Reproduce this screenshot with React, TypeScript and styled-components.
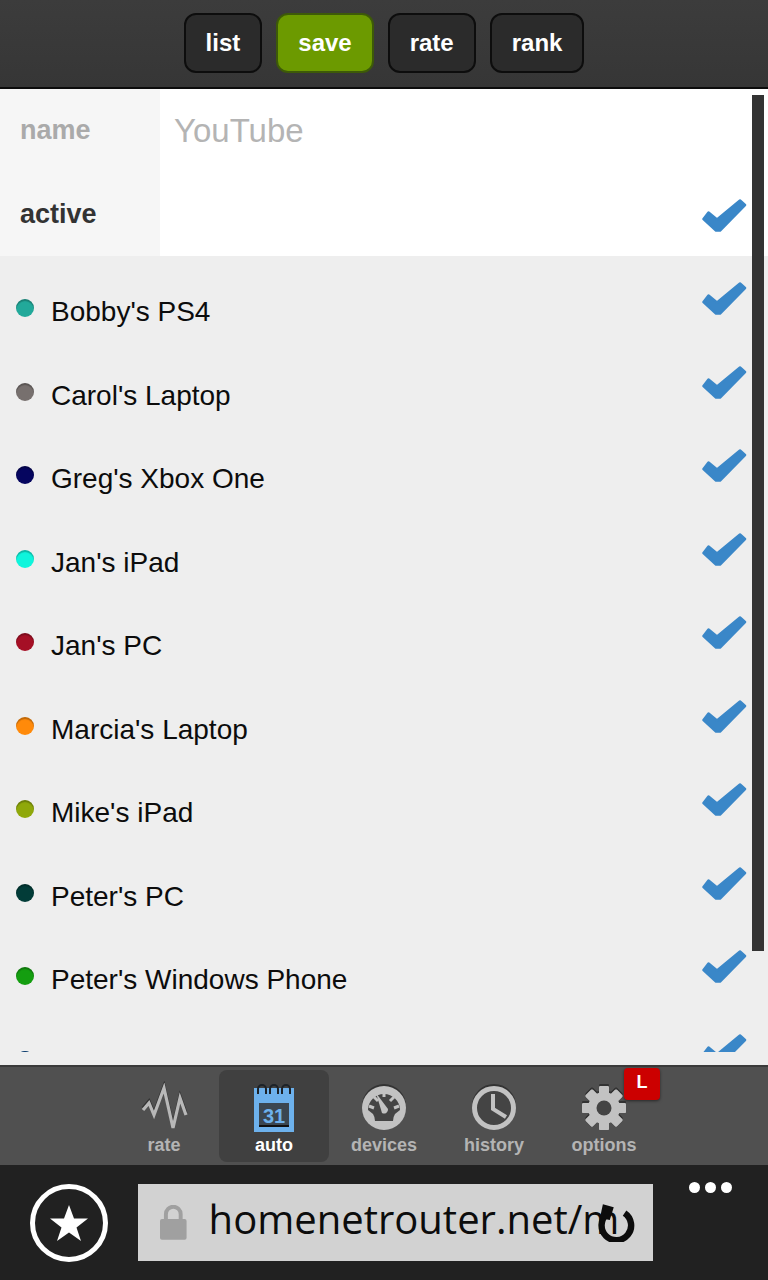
import { ReactNode } from 'react'
import styled, { createGlobalStyle } from 'styled-components'

const devices = [
  { name: "Bobby's PS4", color: '#22a99a' },
  { name: "Carol's Laptop", color: '#77706e' },
  { name: "Greg's Xbox One", color: '#05055f' },
  { name: "Jan's iPad", color: '#0ff5dc' },
  { name: "Jan's PC", color: '#a50f25' },
  { name: "Marcia's Laptop", color: '#ff8a0a' },
  { name: "Mike's iPad", color: '#8fa80a' },
  { name: "Peter's PC", color: '#023c38' },
  { name: "Peter's Windows Phone", color: '#149e10' },
  { name: "Peter's iPhone", color: '#0f4f8f' },
]

const tabs = ['list', 'save', 'rate', 'rank']

function Check() {
  return (
    <CheckIcon viewBox="0 0 45 34">
      <polygon
        points="38,1.5 43,6 18,31.5 14,31.5 1.5,20 6.5,13.5 15,20.5"
        fill="#3a87c8"
        stroke="#3a87c8"
        strokeWidth="2.5"
        strokeLinejoin="round"
      />
    </CheckIcon>
  )
}

function WaveIcon() {
  return (
    <NavSvg viewBox="0 0 50 50">
      <polyline
        points="4,27 10,20 15,32 25,5 34,45 41,15 47,32"
        fill="none"
        stroke="#b8b8b8"
        strokeWidth="3.2"
        strokeLinejoin="miter"
      />
    </NavSvg>
  )
}

function CalendarIcon() {
  return (
    <svg width="50" height="50" viewBox="0 0 50 50">
      <rect x="5" y="5" width="40" height="44" fill="#6db1ec" />
      <rect x="10" y="20" width="30" height="24" fill="#3b4650" />
      <rect x="10" y="42" width="30" height="2" fill="#111" />
      {[13, 25, 37].map((x) => (
        <path key={x} d={`M${x - 4} 11 V6 a4 4 0 0 1 8 0 V11`} fill="none" stroke="#1c2228" strokeWidth="2" />
      ))}
      <text x="25" y="40" textAnchor="middle" fontFamily="'Liberation Sans', sans-serif" fontWeight="700" fontSize="20" fill="#6db1ec">
        31
      </text>
    </svg>
  )
}

function GaugeIcon() {
  return (
    <NavSvg viewBox="0 0 50 50">
      <circle cx="25" cy="25" r="22" fill="#c2c2c2" />
      <path d="M9 27 A16 16 0 0 1 41 27 L36 31 Q34 34 34 38 H16 Q16 34 14 31 Z" fill="#444" />
      <path d="M15 14 l4 4 M25 9 v5 M35 14 l-4 4 M10 23 l5 2 M40 23 l-5 2" stroke="#c2c2c2" strokeWidth="3" />
      <path d="M17 10 L29 26 A4 4 0 0 1 23 30 Z" fill="#c2c2c2" />
    </NavSvg>
  )
}

function ClockIcon() {
  return (
    <NavSvg viewBox="0 0 50 50">
      <circle cx="25" cy="25" r="19.5" fill="#444" stroke="#c2c2c2" strokeWidth="5" />
      <path d="M24 11 V26 L37 34" fill="none" stroke="#c2c2c2" strokeWidth="4" />
    </NavSvg>
  )
}

function GearIcon() {
  const teeth = [0, 45, 90, 135, 180, 225, 270, 315]
  return (
    <NavSvg viewBox="0 0 50 50">
      {teeth.map((a) => (
        <rect key={a} x="20" y="3" width="10" height="44" rx="1.5" fill="#c2c2c2" transform={`rotate(${a} 25 25)`} />
      ))}
      <circle cx="25" cy="25" r="16" fill="#c2c2c2" />
      <circle cx="25" cy="25" r="7.5" fill="#444" />
    </NavSvg>
  )
}

const navItems: { label: string; icon: ReactNode; active?: boolean; badge?: string }[] = [
  { label: 'rate', icon: <WaveIcon /> },
  { label: 'auto', icon: <CalendarIcon />, active: true },
  { label: 'devices', icon: <GaugeIcon /> },
  { label: 'history', icon: <ClockIcon /> },
  { label: 'options', icon: <GearIcon />, badge: 'L' },
]

export default function App() {
  return (
    <Page>
      <GlobalStyle />
      <TopBar>
        {tabs.map((tab) => (
          <TabButton key={tab} $active={tab === 'save'}>
            {tab}
          </TabButton>
        ))}
      </TopBar>

      <Content>
        <Scroller>
          <FormRow>
            <FieldLabel $muted>name</FieldLabel>
            <NameValue>YouTube</NameValue>
          </FormRow>
          <FormRow>
            <FieldLabel>active</FieldLabel>
            <ActiveValue>
              <Check />
            </ActiveValue>
          </FormRow>
          {devices.map((d) => (
            <DeviceRow key={d.name}>
              <Dot $color={d.color} />
              <DeviceName>{d.name}</DeviceName>
              <Check />
            </DeviceRow>
          ))}
        </Scroller>
        <ScrollThumb />
      </Content>

      <BottomNav>
        {navItems.map((item) => (
          <NavItem key={item.label} $active={item.active}>
            {item.icon}
            <NavLabel $active={item.active}>{item.label}</NavLabel>
            {item.badge && <Badge>{item.badge}</Badge>}
          </NavItem>
        ))}
      </BottomNav>

      <BrowserBar>
        <FavButton>
          <svg width="38" height="38" viewBox="0 0 38 38">
            <polygon points="19,1 24,14.5 38,14.5 26.5,23.5 31,37 19,28.5 7,37 11.5,23.5 0,14.5 14,14.5" fill="#fff" />
          </svg>
        </FavButton>
        <UrlBox>
          <svg width="27" height="35" viewBox="0 0 27 35">
            <path d="M6 15 V9 a7.5 7.5 0 0 1 15 0 V15" fill="none" stroke="#a0a0a0" strokeWidth="4" />
            <rect x="0" y="14" width="27" height="21" rx="2" fill="#a0a0a0" />
          </svg>
          <UrlText>homenetrouter.net/m</UrlText>
          <svg width="40" height="38" viewBox="0 0 40 38">
            <path d="M11 10 A15 15 0 1 0 29 9" fill="none" stroke="#0c0c0c" strokeWidth="6.5" />
            <polygon points="7,0 18,3 14,16 4,14" fill="#0c0c0c" />
          </svg>
        </UrlBox>
        <MoreDots>
          <span />
          <span />
          <span />
        </MoreDots>
      </BrowserBar>
    </Page>
  )
}

const GlobalStyle = createGlobalStyle`
  html, body {
    margin: 0;
    padding: 0;
    background: #212121;
  }
`

const Page = styled.div`
  width: 768px;
  height: 1280px;
  display: flex;
  flex-direction: column;
  overflow: hidden;
  font-family: 'Liberation Sans', Arial, sans-serif;
`

const TopBar = styled.div`
  height: 87px;
  flex: none;
  box-sizing: content-box;
  border-bottom: 2px solid #0c0c0c;
  background: linear-gradient(#3c3c3c, #363636);
  display: flex;
  justify-content: center;
  align-items: flex-start;
  padding-top: 0;
  gap: 14px;
`

const TabButton = styled.div<{ $active?: boolean }>`
  height: 60px;
  margin-top: 13px;
  padding: 0 20px;
  box-sizing: border-box;
  display: flex;
  align-items: center;
  justify-content: center;
  border-radius: 12px;
  border: 2px solid ${({ $active }) => ($active ? '#3d5a08' : '#0d0d0d')};
  background: ${({ $active }) => ($active ? '#6c9a00' : '#2b2b2b')};
  color: #fff;
  font-size: 24px;
  font-weight: 700;
`

const Content = styled.div`
  position: relative;
  height: 976px;
  flex: none;
  background: #eee;
  padding-bottom: 13px;
  box-sizing: border-box;
`

const Scroller = styled.div`
  height: 963px;
  overflow: hidden;
`

const FormRow = styled.div`
  display: flex;
  height: 83.5px;
  background: #fff;
`

const FieldLabel = styled.div<{ $muted?: boolean }>`
  width: 160px;
  flex: none;
  box-sizing: border-box;
  padding-left: 20px;
  background: #f6f6f6;
  display: flex;
  align-items: center;
  font-size: 27px;
  font-weight: 700;
  color: ${({ $muted }) => ($muted ? '#aaa' : '#333')};
`

const NameValue = styled.div`
  flex: 1;
  display: flex;
  align-items: center;
  padding-left: 14px;
  font-size: 33px;
  color: #b4b4b4;
`

const ActiveValue = styled.div`
  flex: 1;
  display: flex;
  justify-content: flex-end;
  padding: 26px 21px 0 0;
`

const CheckIcon = styled.svg`
  width: 45px;
  height: 34px;
  flex: none;
`

const DeviceRow = styled.div`
  height: 83.5px;
  display: flex;
  align-items: flex-start;
  box-sizing: border-box;
  padding: 26px 21px 0 16px;
  background: #eee;
`

const Dot = styled.span<{ $color: string }>`
  width: 18px;
  height: 18px;
  margin-top: 17px;
  flex: none;
  border-radius: 50%;
  background: ${({ $color }) => $color};
  box-shadow: inset 0 2px 1px rgba(0, 0, 0, 0.25);
`

const DeviceName = styled.span`
  flex: 1;
  margin-left: 17px;
  margin-top: 14px;
  font-size: 28px;
  line-height: 32px;
  color: #0c0c0c;
`

const ScrollThumb = styled.div`
  position: absolute;
  top: 6px;
  right: 4px;
  width: 12px;
  height: 856px;
  background: #333;
`

const BottomNav = styled.div`
  height: 100px;
  flex: none;
  box-sizing: border-box;
  border-top: 2px solid #3a3a3a;
  background: #505050;
  display: flex;
  justify-content: center;
  padding-top: 3px;
`

const NavItem = styled.div<{ $active?: boolean }>`
  position: relative;
  width: 110px;
  height: 92px;
  box-sizing: border-box;
  padding-top: 13px;
  border-radius: 8px;
  background: ${({ $active }) => ($active ? '#404040' : 'transparent')};
  display: flex;
  flex-direction: column;
  align-items: center;
`

const NavSvg = styled.svg`
  width: 50px;
  height: 50px;
  flex: none;
  filter: drop-shadow(0 -2px 0 #333);
`

const NavLabel = styled.span<{ $active?: boolean }>`
  font-size: 18px;
  line-height: 22px;
  margin-top: 1px;
  font-weight: 700;
  color: ${({ $active }) => ($active ? '#fff' : '#b4b4b4')};
`

const Badge = styled.span`
  position: absolute;
  top: -2px;
  right: -1px;
  width: 36px;
  height: 32px;
  border-radius: 4px;
  background: #cc0000;
  box-shadow: 0 1px 3px rgba(0, 0, 0, 0.5);
  color: #fff;
  font-size: 18px;
  font-weight: 700;
  display: flex;
  align-items: center;
  justify-content: center;
  padding-bottom: 4px;
  box-sizing: border-box;
`

const BrowserBar = styled.div`
  flex: 1;
  background: #212121;
  display: flex;
  align-items: flex-start;
  padding: 19px 0 0 30px;
`

const FavButton = styled.div`
  width: 78px;
  height: 78px;
  box-sizing: border-box;
  border: 5px solid #fff;
  border-radius: 50%;
  flex: none;
  display: flex;
  align-items: center;
  justify-content: center;
`

const UrlBox = styled.div`
  width: 515px;
  height: 77px;
  margin-left: 30px;
  flex: none;
  box-sizing: border-box;
  background: #d2d2d2;
  display: flex;
  align-items: center;
  padding: 0 18px 0 22px;
`

const UrlText = styled.span`
  margin-left: 22px;
  width: 387px;
  flex: none;
  font-family: 'Open Sans', 'Noto Sans', sans-serif;
  font-size: 40px;
  line-height: 60px;
  margin-top: -8px;
  color: #0c0c0c;
  white-space: nowrap;
`

const MoreDots = styled.div`
  display: flex;
  gap: 5px;
  margin: -2px 0 0 36px;
  span {
    width: 11px;
    height: 11px;
    border-radius: 50%;
    background: #fff;
  }
`
